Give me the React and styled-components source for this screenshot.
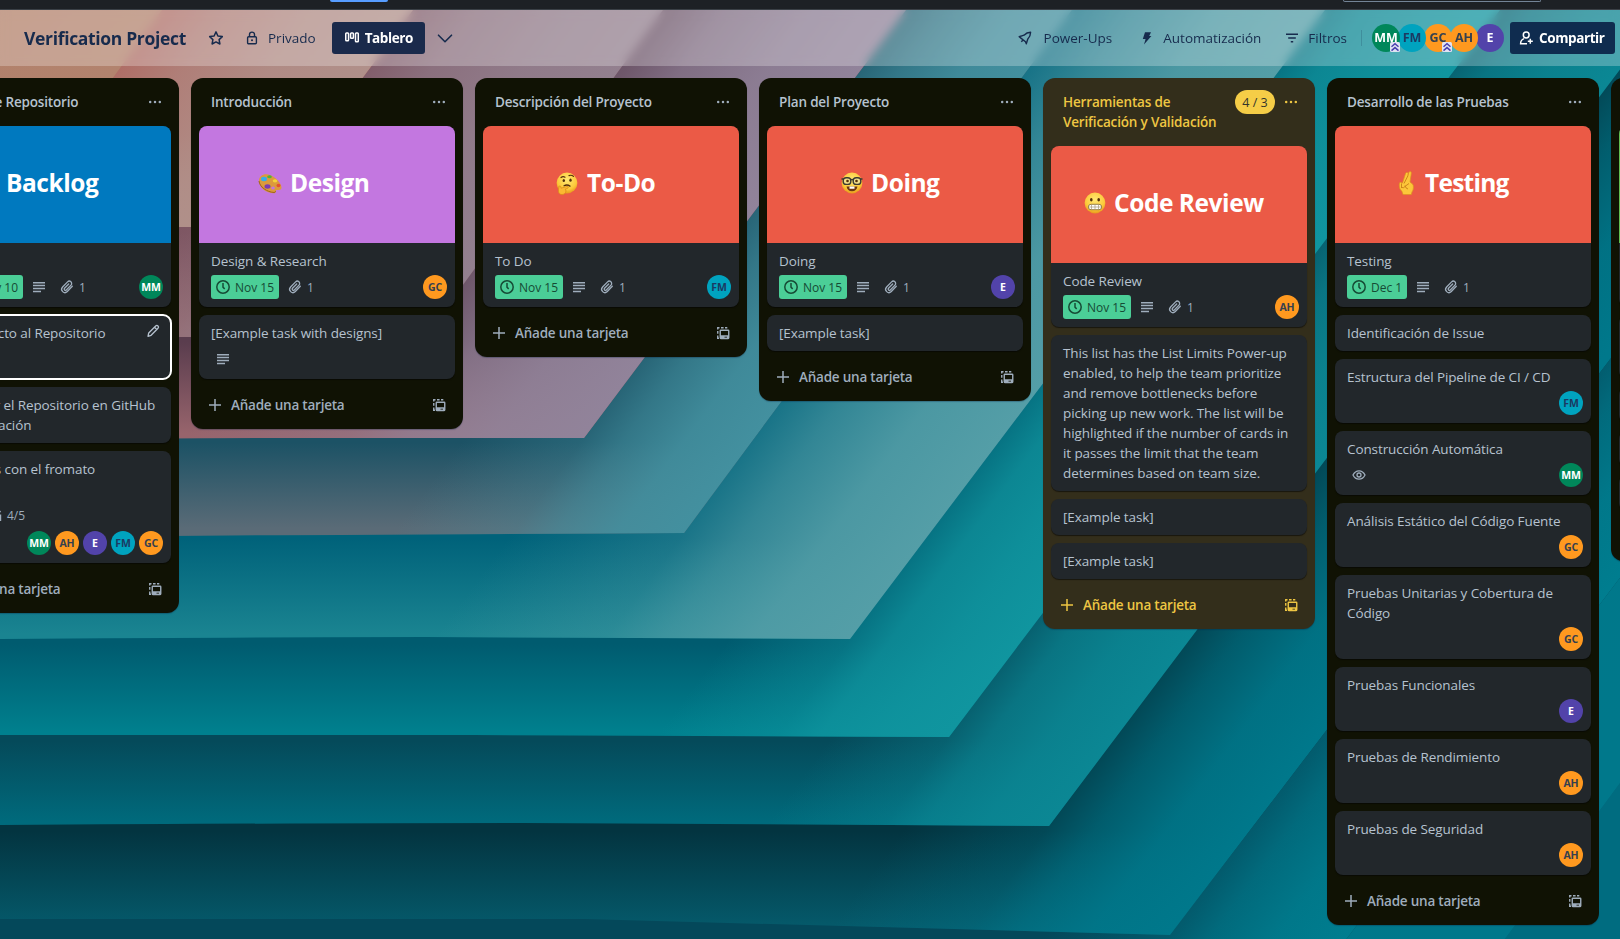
import React from 'react';
import styled, { createGlobalStyle, css } from 'styled-components';

const GlobalStyle = createGlobalStyle`
  *, *::before, *::after { box-sizing: border-box; }
  html, body { margin: 0; padding: 0; height: 100%; overflow: hidden; background: #006c80; }
  body { font-family: "Open Sans", "Noto Sans", sans-serif; font-size: 13.5px; line-height: 20px; color: #b6c2cf; }
`;

/* ---------- wallpaper ---------- */

const FOLDS = [
  { id: 'h', left: 1400, corner: [1430, 1040], top: 2190, band: ['#005468', '#00788a'], edge: '#00788b', inner: [1260, 1050], near: 0.5 },
  { id: 'g', left: 1100, corner: [1270, 1040], top: 2050, band: ['#04485a', '#05586a'], edge: '#007d8f', inner: [1170, 935], near: 0.45 },
  { id: 'f', left: 919, corner: [1170, 935], top: 1877, band: ['#033440', '#055b6c'], edge: '#00788b', inner: [1049, 826], near: 0.4 },
  { id: 'e', left: 825, mid: 823, corner: [1049, 826], top: 1665, band: ['#054a5a', '#006a7c'], edge: '#0b8794', inner: [949, 737], near: 0.5 },
  { id: 'd', left: 735, mid: 735, corner: [949, 737], top: 1500, band: ['#005b6f', '#00808e'], edge: '#10959f', inner: [850, 639], near: 0.55 },
  { id: 'c', left: 639, mid: 637, corner: [850, 639], top: 1325, band: ['#00627a', '#1a8491'], edge: '#549ea7', inner: [684, 533], near: 0.4 },
  { id: 'b', left: 538, mid: 535, corner: [684, 533], top: 1072, band: ['#1c5265', '#5a6b77'], edge: '#43909f', inner: [584, 438], near: 0.4 },
  { id: 'a', left: 441, mid: 438, corner: [584, 438], top: 906, band: ['#5a3d4e', '#97646c'], edge: '#91839a', inner: [425, 337], near: 0.5 },
  { id: 'z2', left: 337, corner: [425, 337], top: 663, band: ['#784a56', '#95666a'], edge: '#93808f', inner: [252, 227], near: 0.5 },
  { id: 'z1', left: 227, corner: [252, 227], top: 413, band: ['#ae5d55', '#b08a7e'], edge: '#b0908a', inner: [75, 130], near: 0.45 },
  { id: 'z0', left: 130, corner: [75, 130], top: 162, band: ['#b0765c', '#b07c64'], edge: '#b2836e', inner: [-60, 20], near: 0.5 },
];

const Scene = styled.svg`
  position: absolute;
  inset: 0;
  width: 100%;
  height: 100%;
`;

function Wallpaper() {
  return (
    <Scene viewBox="0 0 1620 939" preserveAspectRatio="none" aria-hidden="true">
      <defs>
        {FOLDS.map((f) => {
          const d = (f.corner[0] - f.inner[0]) * 0.8 + (f.corner[1] - f.inner[1]) * 0.6;
          return (
            <React.Fragment key={f.id}>
              <linearGradient id={`band-${f.id}`} gradientUnits="userSpaceOnUse" x1="0" x2="0" y1={f.inner[1]} y2={f.corner[1]}>
                <stop offset="0.05" stopColor={f.band[0]} />
                <stop offset="0.95" stopColor={f.band[1]} />
              </linearGradient>
              <linearGradient
                id={`edge-${f.id}`}
                gradientUnits="userSpaceOnUse"
                x1={f.inner[0] - 0.8 * d}
                y1={f.inner[1] - 0.6 * d}
                x2={f.inner[0] + 0.8 * d}
                y2={f.inner[1] + 0.6 * d}
              >
                <stop offset="0.15" stopColor={f.edge} stopOpacity="0" />
                <stop offset="0.5" stopColor={f.edge} stopOpacity={f.near * 0.75} />
                <stop offset="0.62" stopColor={f.edge} stopOpacity={f.near + 0.2} />
                <stop offset="0.8" stopColor={f.edge} stopOpacity="0.9" />
                <stop offset="1" stopColor={f.edge} />
              </linearGradient>
            </React.Fragment>
          );
        })}
      </defs>
      <rect width="1620" height="939" fill="#006c80" />
      {FOLDS.map((f) => {
        const mid = f.mid ?? f.left;
        const d = `M-10 ${f.left} Q${f.corner[0] * 0.3} ${mid} ${f.corner[0] * 0.5} ${mid} L${f.corner[0]} ${f.corner[1]} L${f.top} 10 L${f.top + 8} 0 L-10 0Z`;
        return (
          <g key={f.id}>
            <path d={d} fill={`url(#band-${f.id})`} />
            <path d={d} fill={`url(#edge-${f.id})`} />
          </g>
        );
      })}
    </Scene>
  );
}

/* ---------- icons ---------- */

const Icon = styled.svg.attrs((p) => ({ viewBox: p.viewBox ?? '0 0 16 16', fill: 'none', 'aria-hidden': true }))`
  display: block;
  flex: none;
  width: ${(p) => p.$size ?? 16}px;
  height: ${(p) => p.$size ?? 16}px;
  stroke: currentColor;
  stroke-width: ${(p) => p.$w ?? 1.4};
`;

const StarIcon = () => (
  <Icon $w={1.5}><path strokeLinejoin="round" d="M8 1.900 9.900 6l4.400.6-3.200 3 .8 4.400L8 11.900l-3.900 2.100.8-4.400-3.200-3L6.100 6Z" /></Icon>
);
const LockIcon = () => (
  <Icon $w={1.4}>
    <rect x="3.600" y="6.700" width="8.800" height="7" rx="1" />
    <path d="M5.500 6.500V4.600a2.500 2.500 0 0 1 5 0v1.900" />
    <circle cx="8" cy="10.200" r="1" fill="currentColor" stroke="none" />
  </Icon>
);
const BoardIcon = () => (
  <Icon $w={1.500}>
    <rect x="1.750" y="2.900" width="2.800" height="7.800" rx="0.800" />
    <rect x="6.600" y="2.900" width="2.800" height="5.400" rx="0.800" />
    <rect x="11.500" y="2.900" width="2.800" height="8.800" rx="0.800" />
  </Icon>
);
const ChevronIcon = () => (
  <Icon $w={1.600}><path d="M1.500 5.200 8 11.700l6.500-6.500" strokeLinecap="round" strokeLinejoin="round" /></Icon>
);
const RocketIcon = () => (
  <Icon $w={1.4}>
    <path strokeLinejoin="round" d="M6.100 9.900 2.200 6.700 7 5.200c1.800-1.900 4-2.900 6.600-2.900 0 2.600-1 4.800-2.800 6.700L9.300 13.800 8.500 11.800 6.100 9.900 4.300 11.700" />
  </Icon>
);
const BoltIcon = () => (
  <Icon $w={0}><path fill="currentColor" d="M6 2.200h6L10.200 6h2.200L5 14.500 6.600 9H3.800Z" /></Icon>
);
const FilterIcon = () => (
  <Icon $w={1.600}><path d="M2 4.200h12M4.200 8h7.600M6.800 11.800h2.400" /></Icon>
);
const ShareIcon = () => (
  <Icon $w={1.500}>
    <circle cx="8.200" cy="5" r="2.900" />
    <path d="M9 13.700H2.600c0-2.700 1.400-4.400 3.400-5.100M12.300 8.800v5M9.800 11.300h5" />
  </Icon>
);
const DotsIcon = () => (
  <Icon $w={0}>
    <g fill="currentColor"><circle cx="3.200" cy="8" r="1.250" /><circle cx="8" cy="8" r="1.250" /><circle cx="12.800" cy="8" r="1.250" /></g>
  </Icon>
);
const ClockIcon = () => (
  <Icon $w={1.500}><circle cx="8" cy="8" r="6.200" /><path d="M8 4v4.200l1.700 1.700" /></Icon>
);
const TextIcon = () => (
  <Icon $w={1.500}><path d="M2 3.700h12M2 6.600h12M2 9.500h12M2 12.400h8" /></Icon>
);
const ClipIcon = () => (
  <Icon $w={1.300}>
    <path strokeLinecap="round" d="m13.300 7.300-5 5.200a3.200 3.200 0 0 1-4.700-4.500l5-5.100a2.300 2.300 0 0 1 3.400 3.200L7.300 11a1.200 1.200 0 0 1-1.800-1.700l4.200-4.300" />
  </Icon>
);
const EyeIcon = () => (
  <Icon $w={1.300}>
    <path d="M2 8c1.300-2.700 3.400-4.200 6-4.200S12.700 5.300 14 8c-1.300 2.700-3.400 4.200-6 4.200S3.300 10.700 2 8Z" />
    <circle cx="8" cy="8" r="2" />
  </Icon>
);
const CheckIcon = () => (
  <Icon $w={1.400}><path d="M13.500 7.500V13.300H2.700V2.700H10M5 7.500l3 3 5.500-6.500" /></Icon>
);
const PlusIcon = () => (
  <Icon $w={1.500}><path d="M8 2v12M2 8h12" /></Icon>
);
const PencilIcon = () => (
  <Icon $w={1.300}><path strokeLinejoin="round" d="M3 13.300 3.700 10l7-7a1.400 1.400 0 0 1 2.300 2.300l-6.900 7ZM9.500 4.300l2.200 2.200" /></Icon>
);
const TemplateIcon = () => (
  <Icon $w={1.400}>
    <path d="M2.750 13.800V10.500M2.750 8.800V6M2.750 4.500V2.750H4.500M6 2.750h2.600M10 2.750h2.300M2 13.250h2" />
    <rect x="5.250" y="5.250" width="8.500" height="8.200" rx="0.600" />
    <path stroke="none" fill="currentColor" fillRule="evenodd" d="M5 10.300h9v3.700H5ZM9.500 11.700v1h2.500v-1Z" />
  </Icon>
);

/* ---------- cover emoji ---------- */

const Emoji = styled.svg.attrs({ viewBox: '0 0 24 24', 'aria-hidden': true })`
  flex: none;
  width: ${(p) => p.$w}px;
  height: 24px;
`;
const Face = () => (
  <>
    <defs>
      <radialGradient id="face" cx="0.5" cy="0.35" r="0.65">
        <stop offset="0" stopColor="#ffe873" /><stop offset="0.7" stopColor="#fcc93a" /><stop offset="1" stopColor="#e89a1c" />
      </radialGradient>
    </defs>
    <circle cx="12" cy="12" r="10.400" fill="url(#face)" />
  </>
);
const PaletteEmoji = () => (
  <Emoji $w={24}>
    <path d="M1 10C1 4 7 1.800 12.500 4.200c5.500 2.300 11 8 11 12.300 0 3.500-3.500 2-5 2.500s.5 3.200-2.500 3.200C8.500 22.200 1 17 1 10Z" fill="#dc9a3c" />
    <path d="M1 10c.5 6 8 11 15 11.500 1.500 0 1.500-.8 1.300-1.500" fill="none" stroke="#9c6220" strokeWidth="1" />
    <ellipse cx="6" cy="8" rx="3" ry="2.200" fill="#35aee8" />
    <ellipse cx="11.500" cy="5.800" rx="2.300" ry="1.500" fill="#4cb43c" />
    <ellipse cx="17" cy="9.800" rx="2.300" ry="1.600" fill="#f3d13a" />
    <ellipse cx="20.500" cy="14.500" rx="2" ry="1.800" fill="#e5502e" />
    <ellipse cx="9.500" cy="15.500" rx="3" ry="2.200" fill="#7c3cb0" />
    <ellipse cx="15" cy="17" rx="1.800" ry="1.500" fill="#c376e0" />
  </Emoji>
);
const ThinkingEmoji = () => (
  <Emoji $w={24}>
    <Face />
    <g fill="none" stroke="#53300c" strokeLinecap="round">
      <path d="M6 6.500q2-1.500 4-.300M14 4.600q2.500-1 4.500.8" strokeWidth="1.200" />
      <path d="M9 14.800q3-1.700 6 .3" strokeWidth="1.300" />
    </g>
    <ellipse cx="8.800" cy="9.500" rx="1.200" ry="1.600" fill="#53300c" />
    <ellipse cx="15.500" cy="9.200" rx="1.200" ry="1.600" fill="#53300c" />
    <path d="M4 15.500c1-1.500 2 0 2 1.700l6-1.800c1.600-.3 1.800 1.600.3 2l-2 .8c1.500 2 0 5.300-3.300 5.300-3.500 0-4.300-3-3-8Z" fill="#fbb932" stroke="#d98a18" strokeWidth="0.700" />
  </Emoji>
);
const NerdEmoji = () => (
  <Emoji $w={24}>
    <Face />
    <path d="M6.500 15.500h11c-.5 3-2.500 4.700-5.500 4.700s-5-1.700-5.500-4.700Z" fill="#6b3510" />
    <path d="M9.500 15.500h5v2.200h-5Z" fill="#fff" />
    <g fill="#f3e08a" stroke="#3b3a32" strokeWidth="1.400">
      <rect x="3.200" y="6.800" width="7.600" height="6.600" rx="3" /><rect x="13.200" y="6.800" width="7.600" height="6.600" rx="3" />
    </g>
    <path d="M1.500 8h2M20.500 8h2M10.500 9q1.500-1 3 0" stroke="#3b3a32" strokeWidth="1.500" fill="none" />
    <circle cx="7.500" cy="10" r="1.300" fill="#53300c" /><circle cx="16.500" cy="10" r="1.300" fill="#53300c" />
  </Emoji>
);
const GrimaceEmoji = () => (
  <Emoji $w={24}>
    <Face />
    <ellipse cx="8.300" cy="8.800" rx="1.300" ry="1.700" fill="#53300c" />
    <ellipse cx="15.700" cy="8.800" rx="1.300" ry="1.700" fill="#53300c" />
    <rect x="5.300" y="13.300" width="13.400" height="5.400" rx="2.700" fill="#fff" stroke="#8f7433" strokeWidth="0.900" />
    <path d="M5.500 16h13M8.500 13.500v5M12 13.500v5M15.500 13.500v5" stroke="#a89a78" strokeWidth="0.700" />
  </Emoji>
);
const FingersEmoji = () => (
  <Emoji $w={24}>
    <path d="M7.500 12 10.500 2.500c.6-1.800 2.900-1.200 2.600.6l-.3 2 1-3.600c.6-1.700 2.900-1 2.500.8L15 11l2.500 2c1.500 1.500 1.100 6-.5 8l-.7 2.500H8L6.800 20c-2-1-2.700-4-2.500-7 0-2 1.800-2.200 2.500-1Z" fill="#fcc63a" stroke="#dc9420" strokeWidth="0.700" />
    <path d="M9 12.500 12.800 5M6.500 12.500v4M6 16.500q3 1 4.500-1.500l3.500-2.500M10 14.500q.5 3 3 3.500" fill="none" stroke="#c97f17" strokeWidth="0.900" />
  </Emoji>
);

/* ---------- shell ---------- */

const Screen = styled.div`
  position: relative;
  display: flex;
  flex-direction: column;
  width: 100%;
  height: 939px;
  overflow: hidden;
`;

const TopNav = styled.div`
  position: relative;
  z-index: 1;
  flex: none;
  display: flex;
  justify-content: space-between;
  align-items: flex-start;
  height: 10px;
  padding: 0 79px 0 330px;
  background: #1d2125;
  border-bottom: 1px solid #3a4046;
`;
const CreateEdge = styled.span`
  width: 58px;
  height: 2px;
  border-radius: 0 0 3px 3px;
  background: #579dff;
`;
const SearchEdge = styled.span`
  width: 198px;
  height: 2px;
  border: 1px solid #738496;
  border-top: 0;
  border-radius: 0 0 3px 3px;
`;

const BoardHeader = styled.header`
  position: relative;
  z-index: 1;
  flex: none;
  display: flex;
  align-items: center;
  height: 56px;
  padding: 0 5px 0 24px;
  background: rgba(255, 255, 255, 0.26);
  backdrop-filter: blur(5px);
  color: #172b4d;
`;
const BoardName = styled.h1`
  margin: 0;
  width: 184px;
  font-size: 17.5px;
  font-weight: 700;
  letter-spacing: -0.33px;
  white-space: nowrap;
`;
const HeaderItem = styled.div`
  display: flex;
  align-items: center;
  gap: ${(p) => p.$gap ?? 8}px;
  margin-left: ${(p) => p.$ml ?? 0}px;
  white-space: nowrap;
`;
const HeaderButton = styled.button`
  display: flex;
  align-items: center;
  gap: ${(p) => p.$gap ?? 5}px;
  width: ${(p) => p.$width}px;
  height: 32px;
  margin: 0 ${(p) => p.$mr ?? 0}px 0 ${(p) => p.$ml ?? 0}px;
  padding: 0 0 0 ${(p) => p.$pad}px;
  border: 0;
  border-radius: 3px;
  background: ${(p) => p.$bg};
  color: #fff;
  font: 700 13.5px/20px "Open Sans", "Noto Sans", sans-serif;
  letter-spacing: -0.4px;
`;
const Spacer = styled.div`
  flex: 1;
`;
const Divider = styled.span`
  width: 1px;
  height: 16px;
  margin: 0 10px 0 14px;
  background: rgba(9, 30, 66, 0.18);
`;
const Facepile = styled.div`
  display: flex;
  margin-right: 8px;
`;

const MEMBER = {
  MM: ['#00875a', '#ffffff'],
  FM: ['#00a3bf', '#1b3a63'],
  GC: ['#ff991f', '#35404f'],
  AH: ['#ff991f', '#35404f'],
  E: ['#5243aa', '#ffffff'],
};
const Avatar = styled.span`
  position: relative;
  display: flex;
  align-items: center;
  justify-content: center;
  flex: none;
  width: 24px;
  height: 24px;
  border-radius: 50%;
  background: ${(p) => MEMBER[p.$who][0]};
  color: ${(p) => MEMBER[p.$who][1]};
  font-size: 10.5px;
  font-weight: 700;
  line-height: 24px;
  letter-spacing: -0.1px;
  ${(p) =>
    p.$large &&
    css`
      width: 28px;
      height: 28px;
      font-size: 12.500px;
      margin-right: -2px;
      z-index: ${p.$z};
    `}
`;
const AdminMark = styled.svg.attrs({ viewBox: '0 0 10 10', 'aria-hidden': true })`
  position: absolute;
  right: 0;
  bottom: 0;
  width: 10px;
  height: 10px;
`;
const HeaderMember = ({ who, admin, z }) => (
  <Avatar $who={who} $large $z={z}>
    {who}
    {admin && (
      <AdminMark>
        <rect width="10" height="10" rx="1.500" fill="#dfe3f2" />
        <path d="m1.500 4.800 3.500-3 3.500 3M1.500 8.600l3.500-3 3.500 3" fill="none" stroke="#4a3fb0" strokeWidth="1.500" />
      </AdminMark>
    )}
  </Avatar>
);

/* ---------- board ---------- */

const Board = styled.main`
  position: relative;
  flex: 1;
  display: flex;
  align-items: flex-start;
  gap: 12px;
  padding-top: 12px;
  margin-left: -93px;
  min-height: 0;
`;
const List = styled.section`
  flex: none;
  width: 272px;
  padding: 0 8px 8px;
  border-radius: 12px;
  background: ${(p) => (p.$over ? '#332e1b' : '#101204')};
  color: ${(p) => (p.$over ? '#eec643' : '#9fadbc')};
  box-shadow: 0 1px 1px rgba(9, 30, 66, 0.3);
`;
const ListHeader = styled.div`
  display: flex;
  align-items: flex-start;
  padding: 14px 8px 14px 12px;
`;
const ListTitle = styled.h2`
  flex: 1;
  margin: 0;
  font-size: 13.5px;
  font-weight: 600;
  line-height: 20px;
  letter-spacing: -0.17px;
  white-space: pre;
  color: ${(p) => (p.$over ? 'inherit' : '#b6c2cf')};
`;
const Limit = styled.span`
  display: flex;
  align-items: center;
  justify-content: center;
  width: 40px;
  height: 24px;
  margin: -2px 8px -2px 0;
  padding-top: 1px;
  border-radius: 12px;
  background: #f5cd47;
  color: #33352c;
  font-size: 12.500px;
`;
const MenuSlot = styled.span`
  display: flex;
  align-items: center;
  height: 20px;
`;
const Cards = styled.div`
  display: flex;
  flex-direction: column;
  gap: 8px;
`;
const Card = styled.article`
  position: relative;
  border-radius: 8px;
  overflow: hidden;
  background: #22272b;
  color: #b6c2cf;
  box-shadow: 0 1px 1px rgba(3, 4, 4, 0.55);
  ${(p) => p.$focused && css`
    overflow: visible;
    outline: 2px solid #fff;
    outline-offset: -1px;
  `}
`;
const Cover = styled.div`
  display: flex;
  align-items: center;
  gap: ${(p) => p.$gap}px;
  height: 117px;
  padding: 0 0 3px ${(p) => p.$start}px;
  background: ${(p) => p.$bg};
  color: #fff;
  font-size: 24.500px;
  font-weight: 700;
  letter-spacing: ${(p) => p.$tracking ?? -0.45}px;
  line-height: 30px;
  white-space: nowrap;
`;
const CardBody = styled.div`
  padding: 8px 8px 8px 12px;
`;
const CardTitle = styled.div`
  height: ${(p) => p.$lines * 20}px;
  white-space: pre;
  letter-spacing: -0.1px;
`;
const Meta = styled.div`
  display: flex;
  flex-wrap: wrap;
  justify-content: space-between;
  row-gap: 4px;
  margin-top: 4px;
`;
const Badges = styled.div`
  display: flex;
  gap: 4px;
  flex-basis: ${(p) => (p.$wide ? '100%' : 'auto')};
`;
const Badge = styled.span`
  display: flex;
  align-items: center;
  height: 24px;
  padding-left: 4px;
  color: #9fadbc;
  font-size: 12px;
  line-height: 24px;
  svg { margin-right: 4px; }
  ${(p) => p.$done && css`
    width: ${p.$width}px;
    border-radius: 3px;
    background: #4bce97;
    color: #164b35;
  `}
`;
const BadgeLabel = styled.span`
  padding-top: 2px;
`;
const Members = styled.div`
  display: flex;
  gap: 4px;
  margin-left: auto;
`;
const EditSlot = styled.span`
  position: absolute;
  top: 8px;
  right: 10px;
  color: #b6c2cf;
`;
const Footer = styled.div`
  display: flex;
  align-items: center;
  height: 32px;
  margin-top: 10px;
  padding: 0 8px;
  font-weight: 600;
  letter-spacing: -0.22px;
`;
const FooterLabel = styled.span`
  flex: 1;
  margin-left: 8px;
`;

const BADGE_ICON = { watch: EyeIcon, text: TextIcon, clip: ClipIcon, check: CheckIcon };

const RED = '#eb5a46';
const LISTS = [
  {
    title: 'Creación de Repositorio',
    cards: [
      { cover: { bg: '#0079bf', text: 'Backlog', start: 59, gap: 8, emoji: PaletteEmoji }, title: '', badges: [['watch'], ['date', 'Nov 10', 68], ['text'], ['clip', '1']], members: ['MM'] },
      { title: 'Links Proyecto al Repositorio', badges: [['watch']], focused: true },
      { title: 'Administrar el Repositorio en GitHub\nsu Configuración' },
      { title: 'De commits con el fromato', lines: 2, badges: [['watch'], ['text'], ['check', '4/5']], members: ['MM', 'AH', 'E', 'FM', 'GC'], stacked: true },
    ],
  },
  {
    title: 'Introducción',
    cards: [
      { cover: { bg: '#c377e0', text: 'Design', start: 59, gap: 8, emoji: PaletteEmoji }, title: 'Design & Research', badges: [['date', 'Nov 15', 68], ['clip', '1']], members: ['GC'] },
      { title: '[Example task with designs]', badges: [['text']] },
    ],
  },
  {
    title: 'Descripción del Proyecto',
    cards: [
      { cover: { bg: RED, text: 'To-Do', start: 72, gap: 8, emoji: ThinkingEmoji }, title: 'To Do', badges: [['date', 'Nov 15', 68], ['text'], ['clip', '1']], members: ['FM'] },
    ],
  },
  {
    title: 'Plan del Proyecto',
    cards: [
      { cover: { bg: RED, text: 'Doing', start: 73, gap: 7, emoji: NerdEmoji }, title: 'Doing', badges: [['date', 'Nov 15', 68], ['text'], ['clip', '1']], members: ['E'] },
      { title: '[Example task]' },
    ],
  },
  {
    title: 'Herramientas de\nVerificación y Validación',
    over: true,
    limit: '4 / 3',
    cards: [
      { cover: { bg: RED, text: 'Code Review', start: 32, gap: 7, emoji: GrimaceEmoji }, title: 'Code Review', badges: [['date', 'Nov 15', 68], ['text'], ['clip', '1']], members: ['AH'] },
      { title: 'This list has the List Limits Power-up\nenabled, to help the team prioritize\nand remove bottlenecks before\npicking up new work. The list will be\nhighlighted if the number of cards in\nit passes the limit that the team\ndetermines based on team size.' },
      { title: '[Example task]' },
      { title: '[Example task]' },
    ],
  },
  {
    title: 'Desarrollo de las Pruebas',
    cards: [
      { cover: { bg: RED, text: 'Testing', start: 60, gap: 6, tracking: -0.75, emoji: FingersEmoji }, title: 'Testing', badges: [['date', 'Dec 1', 60], ['text'], ['clip', '1']] },
      { title: 'Identificación de Issue' },
      { title: 'Estructura del Pipeline de CI / CD', members: ['FM'] },
      { title: 'Construcción Automática', badges: [['watch']], members: ['MM'] },
      { title: 'Análisis Estático del Código Fuente', members: ['GC'] },
      { title: 'Pruebas Unitarias y Cobertura de\nCódigo', members: ['GC'] },
      { title: 'Pruebas Funcionales', members: ['E'] },
      { title: 'Pruebas de Rendimiento', members: ['AH'] },
      { title: 'Pruebas de Seguridad', members: ['AH'] },
    ],
  },
  {
    title: ' ',
    bare: true,
    cards: [
      { cover: { bg: '#61bd4f', text: '', start: 60, gap: 8 }, title: '', badges: [['watch']] },
      { title: '', badges: [['watch']] },
      { title: '' },
      { title: '' },
      { title: '' },
    ],
  },
];

function TaskCard({ cover, title, lines, badges, members, focused, stacked }) {
  const CoverEmoji = cover?.emoji;
  return (
    <Card $focused={focused}>
      {cover && (
        <Cover $bg={cover.bg} $start={cover.start} $gap={cover.gap} $tracking={cover.tracking}>
          {CoverEmoji && <CoverEmoji />}
          <span>{cover.text}</span>
        </Cover>
      )}
      <CardBody>
        <CardTitle $lines={lines ?? title.split('\n').length}>{title}</CardTitle>
        {(badges || members) && (
          <Meta>
            {badges && (
              <Badges $wide={stacked}>
                {badges.map(([kind, label, width]) => {
                  const Glyph = kind === 'date' ? ClockIcon : BADGE_ICON[kind];
                  return (
                    <Badge key={kind} $done={kind === 'date'} $width={width}>
                      <Glyph />
                      {label && <BadgeLabel>{label}</BadgeLabel>}
                    </Badge>
                  );
                })}
              </Badges>
            )}
            {members && (
              <Members>
                {members.map((m) => <Avatar key={m} $who={m}>{m}</Avatar>)}
              </Members>
            )}
          </Meta>
        )}
      </CardBody>
      {focused && <EditSlot><PencilIcon /></EditSlot>}
    </Card>
  );
}

export default function App() {
  return (
    <Screen>
      <GlobalStyle />
      <Wallpaper />
      <TopNav>
        <CreateEdge />
        <SearchEdge />
      </TopNav>
      <BoardHeader>
        <BoardName>Verification Project</BoardName>
        <StarIcon />
        <HeaderItem $ml={20}><LockIcon />Privado</HeaderItem>
        <HeaderButton $ml={16} $mr={12} $width={93} $pad={12} $bg="#1a2a4b"><BoardIcon />Tablero</HeaderButton>
        <ChevronIcon />
        <Spacer />
        <HeaderItem $gap={11}><RocketIcon />Power-Ups</HeaderItem>
        <HeaderItem $ml={27}><BoltIcon />Automatización</HeaderItem>
        <HeaderItem $ml={23}><FilterIcon />Filtros</HeaderItem>
        <Divider />
        <Facepile>
          <HeaderMember who="MM" admin z={5} />
          <HeaderMember who="FM" z={4} />
          <HeaderMember who="GC" admin z={3} />
          <HeaderMember who="AH" z={2} />
          <HeaderMember who="E" z={1} />
        </Facepile>
        <HeaderButton $width={105} $pad={8} $bg="#0f2c4f"><ShareIcon />Compartir</HeaderButton>
      </BoardHeader>
      <Board>
        {LISTS.map((list, i) => (
          <List key={i} $over={list.over}>
            <ListHeader>
              <ListTitle $over={list.over}>{list.title}</ListTitle>
              {list.limit && <Limit>{list.limit}</Limit>}
              <MenuSlot><DotsIcon /></MenuSlot>
            </ListHeader>
            <Cards>
              {list.cards.map((card, j) => <TaskCard key={j} {...card} />)}
            </Cards>
            <Footer>
              <PlusIcon />
              <FooterLabel>{list.bare ? '' : 'Añade una tarjeta'}</FooterLabel>
              <TemplateIcon />
            </Footer>
          </List>
        ))}
      </Board>
    </Screen>
  );
}
